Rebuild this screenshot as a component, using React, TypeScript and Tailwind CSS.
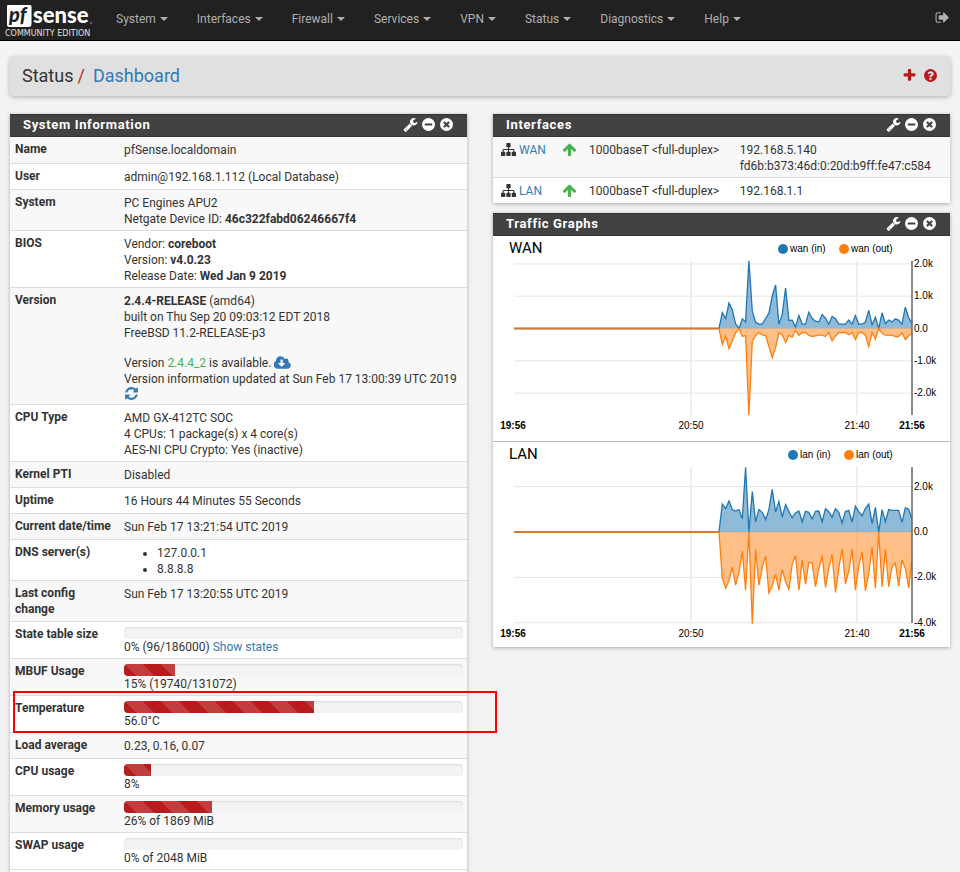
import type { ReactNode } from "react";

const circle =
  "q0 209-103 385.500t-279.500 279.500-385.500 103-385.500-103-279.500-279.500-103-385.500 103-385.500 279.500-279.500 385.500-103 385.500 103 279.500 279.500 103 385.500z";

const icons = {
  signOut:
    "M704 1440q0 4 1 20t.5 26.500-3 23.500-10 19.500-20.500 6.500h-320q-119 0-203.500-84.500t-84.500-203.500v-704q0-119 84.500-203.500t203.500-84.500h320q13 0 22.500 9.500t9.500 22.500q0 4 1 20t.5 26.500-3 23.500-10 19.500-20.500 6.500h-320q-66 0-113 47t-47 113v704q0 66 47 113t113 47h312l11.500 1 11.500 3 8 5.500 7 9 2 13.500zm928-544q0 26-19 45l-544 544q-19 19-45 19t-45-19-19-45v-288h-448q-26 0-45-19t-19-45v-384q0-26 19-45t45-19h448v-288q0-26 19-45t45-19 45 19l544 544q19 19 19 45z",
  plus: "M1600 736v192q0 40-28 68t-68 28h-416v416q0 40-28 68t-68 28h-192q-40 0-68-28t-28-68v-416h-416q-40 0-68-28t-28-68v-192q0-40 28-68t68-28h416v-416q0-40 28-68t68-28h192q40 0 68 28t28 68v416h416q40 0 68 28t28 68z",
  question:
    "M1024 1376v-192q0-14-9-23t-23-9h-192q-14 0-23 9t-9 23v192q0 14 9 23t23 9h192q14 0 23-9t9-23zm256-672q0-88-55.500-163t-138.500-116-170-41q-243 0-371 213-15 24 8 42l132 100q7 6 19 6 16 0 25-12 53-68 86-92 34-24 86-24 48 0 85.500 26t37.500 59q0 38-20 61t-68 45q-63 28-115.500 86.500t-52.500 125.500v36q0 14 9 23t23 9h192q14 0 23-9t9-23q0-19 21.500-49.500t54.500-49.500q32-18 49-28.500t46-35 44.500-48 28-60.500 12.500-81zm384 192" +
    circle,
  minus:
    "M1344 960v-128q0-26-19-45t-45-19h-768q-26 0-45 19t-19 45v128q0 26 19 45t45 19h768q26 0 45-19t19-45zm320-64" +
    circle,
  close:
    "M1277 1122q0-26-19-45l-181-181 181-181q19-19 19-45 0-27-19-46l-90-90q-19-19-46-19-26 0-45 19l-181 181-181-181q-19-19-45-19-27 0-46 19l-90 90q-19 19-19 46 0 26 19 45l181 181-181 181q-19 19-19 45 0 27 19 46l90 90q19 19 46 19 26 0 45-19l181-181 181 181q19 19 45 19 27 0 46-19l90-90q19-19 19-46zm387-226" +
    circle,
  wrench:
    "M448 1472q0-26-19-45t-45-19-45 19-19 45 19 45 45 19 45-19 19-45zm644-420l-682 682q-37 37-90 37-52 0-91-37l-106-108q-38-36-38-90 0-53 38-91l681-681q39 98 114.500 173.500t173.500 114.500zm634-435q0 39-23 106-47 134-164.500 217.500t-258.500 83.500q-185 0-316.500-131.500t-131.500-316.500 131.500-316.500 316.500-131.500q58 0 121.500 16.500t107.500 46.500q16 11 16 28t-16 28l-293 169v224l193 107q5-3 79-48.500t135.500-81 70.500-35.500q15 0 23.500 10t8.500 25z",
  sitemap:
    "M1792 1248v320q0 40-28 68t-68 28h-320q-40 0-68-28t-28-68v-320q0-40 28-68t68-28h96v-192h-512v192h96q40 0 68 28t28 68v320q0 40-28 68t-68 28h-320q-40 0-68-28t-28-68v-320q0-40 28-68t68-28h96v-192h-512v192h96q40 0 68 28t28 68v320q0 40-28 68t-68 28h-320q-40 0-68-28t-28-68v-320q0-40 28-68t68-28h96v-192q0-52 38-90t90-38h512v-192h-96q-40 0-68-28t-28-68v-320q0-40 28-68t68-28h320q40 0 68 28t28 68v320q0 40-28 68t-68 28h-96v192h512q52 0 90 38t38 90v192h96q40 0 68 28t28 68z",
  arrowUp:
    "M1675 971q0 51-37 90l-75 75q-38 38-91 38-54 0-90-38l-294-293v704q0 52-37.500 84.500t-90.500 32.500h-128q-53 0-90.500-32.500t-37.500-84.500v-704l-294 293q-36 38-90 38t-90-38l-75-75q-38-38-38-90 0-53 38-91l651-651q35-37 90-37 54 0 91 37l651 651q37 39 37 91z",
  cloud:
    "M1216 928q0-14-9-23t-23-9h-224v-352q0-13-9.500-22.500t-22.500-9.500h-192q-13 0-22.500 9.500t-9.500 22.500v352h-224q-13 0-22.500 9.500t-9.500 22.500q0 14 9 23l352 352q9 9 23 9t23-9l351-351q10-12 10-24zm640 224q0 159-112.500 271.500t-271.500 112.500h-1088q-185 0-316.500-131.500t-131.500-316.500q0-130 70-240t188-165q-2-30-2-43 0-212 150-362t362-150q156 0 285.500 87t188.500 231q71-62 166-62 106 0 181 75t75 181q0 76-41 138 130 31 213.500 135.500t83.500 238.500z",
  refresh:
    "M1639 1056q0 5-1 7-64 268-268 434.500t-478 166.500q-146 0-282.500-55t-243.500-157l-129 129q-19 19-45 19t-45-19-19-45v-448q0-26 19-45t45-19h448q26 0 45 19t19 45-19 45l-137 137q71 66 161 102t187 36q134 0 250-65t186-179q11-17 53-117 8-23 30-23h192q13 0 22.500 9.500t9.500 22.500zm25-800v448q0 26-19 45t-45 19h-448q-26 0-45-19t-19-45 19-45l138-138q-148-137-349-137-134 0-250 65t-186 179q-11 17-53 117-8 23-30 23h-199q-13 0-22.500-9.500t-9.500-22.500v-7q65-268 270-434.500t480-166.500q146 0 284 55.500t245 156.500l130-129q19-19 45-19t45 19 19 45z",
};

function Icon({ name, className = "size-[15px]" }: { name: keyof typeof icons; className?: string }) {
  return (
    <svg
      viewBox={name === "cloud" ? "0 0 1856 1792" : "0 0 1792 1792"}
      className={`inline-block shrink-0 fill-current ${className}`}
      aria-hidden="true"
    >
      <path d={icons[name]} />
    </svg>
  );
}

function Logo() {
  return (
    <svg
      viewBox="0 0 90 36"
      className="h-[36px] w-[90px] overflow-visible"
      role="img"
      aria-label="pfSense Community Edition"
    >
      <path d="M3 3h22q1.500 0 1.500 1.500V22q0 3-3 3H3.500Q2 24.500 2 23V4q0-1 1-1z" fill="#fff" />
      <text x="4" y="20" fontFamily="Lato, sans-serif" fontWeight="900" fontStyle="italic" fontSize="20" fill="#212121">
        pf
      </text>
      <text x="28" y="21" fontFamily="Lato, sans-serif" fontWeight="900" fontSize="22" fill="#fff">
        sense
      </text>
      <circle cx="86" cy="21" r="0.800" fill="#aaa" />
      <text x="0" y="34" fontFamily="DejaVu Sans, sans-serif" fontSize="8" fill="#e0e0e0">
        COMMUNITY EDITION
      </text>
    </svg>
  );
}

const menu = ["System", "Interfaces", "Firewall", "Services", "VPN", "Status", "Diagnostics", "Help"];

function Navbar() {
  return (
    <nav className="flex h-[41px] items-start border-b border-black bg-[#212121] pr-[10px] pl-[5px] text-[12px] leading-4 text-[#b0b0b0]">
      <a href="#" className="mt-0.5 mr-[21px]">
        <Logo />
      </a>
      <ul className="mt-[11px] flex flex-1 gap-[29px]">
        {menu.map((item) => (
          <li key={item}>
            <button type="button" className="flex items-center gap-1">
              {item}
              <span className="border-x-4 border-t-4 border-x-transparent border-t-current" />
            </button>
          </li>
        ))}
      </ul>
      <button type="button" aria-label="Logout" className="mt-[10px] flex">
        <Icon name="signOut" />
      </button>
    </nav>
  );
}

function Panel({ title, children }: { title: string; children: ReactNode }) {
  return (
    <section className="bg-white shadow-[0_1px_4px_rgba(0,0,0,0.3)]">
      <header className="flex h-[23px] items-center justify-between border-y border-y-[#333] bg-[#424242] pr-[13px] pb-0.5 pl-[13px] text-white">
        <h2 className="text-[13px] leading-4 font-bold tracking-wider">{title}</h2>
        <div className="flex gap-[3px]">
          <button type="button" aria-label="Settings" className="flex">
            <Icon name="wrench" />
          </button>
          <button type="button" aria-label="Minimize" className="flex">
            <Icon name="minus" />
          </button>
          <button type="button" aria-label="Close" className="flex">
            <Icon name="close" />
          </button>
        </div>
      </header>
      {children}
    </section>
  );
}

function Row({ label, marked, children }: { label: string; marked?: boolean; children: ReactNode }) {
  return (
    <tr className="relative h-[26px] border-b border-[#ddd] align-top odd:bg-[#f8f8f8]">
      <th scope="row" className="w-[114px] pt-1 pr-[10px] pb-px pl-[5px] text-left font-bold">
        {label}
        {marked && <span className="absolute -top-1 -right-[30px] -bottom-0.5 left-[3px] border-2 border-[#ff0000]" />}
      </th>
      <td className="pt-[5px] pr-1 pb-[3px]">{children}</td>
    </tr>
  );
}

function Meter({ label, percent, children }: { label: string; percent: number; children: ReactNode }) {
  return (
    <>
      <div
        role="progressbar"
        aria-label={label}
        aria-valuenow={percent}
        className="h-3 overflow-hidden rounded-sm bg-[#f3f3f3] shadow-[inset_0_1px_2px_rgba(0,0,0,0.1)]"
      >
        <div
          className="h-full bg-[#b71c1c] bg-[linear-gradient(45deg,rgba(255,255,255,.15)_25%,transparent_25%,transparent_50%,rgba(255,255,255,.15)_50%,rgba(255,255,255,.15)_75%,transparent_75%)] bg-[length:36px_36px]"
          style={{ width: `${percent}%` }}
        />
      </div>
      {children}
    </>
  );
}

function SystemInformation() {
  return (
    <Panel title="System Information">
      <table className="mb-1 w-full">
        <tbody>
          <Row label="Name">pfSense.localdomain</Row>
          <Row label="User">admin@192.168.1.112 (Local Database)</Row>
          <Row label="System">
            PC Engines APU2
            <br />
            Netgate Device ID: <b>46c322fabd06246667f4</b>
          </Row>
          <Row label="BIOS">
            Vendor: <b>coreboot</b>
            <br />
            Version: <b>v4.0.23</b>
            <br />
            Release Date: <b>Wed Jan 9 2019</b>
          </Row>
          <Row label="Version">
            <p>
              <b>2.4.4-RELEASE</b> (amd64)
              <br />
              built on Thu Sep 20 09:03:12 EDT 2018
              <br />
              FreeBSD 11.2-RELEASE-p3
            </p>
            <p className="mt-[14px]">
              Version <span className="text-[#4caf50]">2.4.4_2</span> is available.{" "}
              <a href="#" aria-label="Update" className="inline-flex h-3 items-center align-top text-[#337ab7]">
                <Icon name="cloud" className="mt-1 h-4 w-[17px]" />
              </a>
              <br />
              Version information updated at Sun Feb 17 13:00:39 UTC 2019
            </p>
            <button type="button" aria-label="Refresh" className="flex h-[14px] items-center text-[#337ab7]">
              <Icon name="refresh" />
            </button>
          </Row>
          <Row label="CPU Type">
            AMD GX-412TC SOC
            <br />
            4 CPUs: 1 package(s) x 4 core(s)
            <br />
            AES-NI CPU Crypto: Yes (inactive)
          </Row>
          <Row label="Kernel PTI">Disabled</Row>
          <Row label="Uptime">16 Hours 44 Minutes 55 Seconds</Row>
          <Row label="Current date/time">Sun Feb 17 13:21:54 UTC 2019</Row>
          <Row label="DNS server(s)">
            <ul className="list-disc pl-[33px]">
              <li>127.0.0.1</li>
              <li>8.8.8.8</li>
            </ul>
          </Row>
          <Row label="Last config change">
            <p className="pb-4">Sun Feb 17 13:20:55 UTC 2019</p>
          </Row>
          <Row label="State table size">
            <Meter label="State table size" percent={0}>
              0% (96/186000){" "}
              <a href="#" className="text-[#337ab7]">
                Show states
              </a>
            </Meter>
          </Row>
          <Row label="MBUF Usage">
            <Meter label="MBUF Usage" percent={15}>
              15% (19740/131072)
            </Meter>
          </Row>
          <Row label="Temperature" marked>
            <Meter label="Temperature" percent={56}>
              56.0°C
            </Meter>
          </Row>
          <Row label="Load average">0.23, 0.16, 0.07</Row>
          <Row label="CPU usage">
            <Meter label="CPU usage" percent={8}>
              8%
            </Meter>
          </Row>
          <Row label="Memory usage">
            <Meter label="Memory usage" percent={26}>
              26% of 1869 MiB
            </Meter>
          </Row>
          <Row label="SWAP usage">
            <Meter label="SWAP usage" percent={0}>
              0% of 2048 MiB
            </Meter>
          </Row>
        </tbody>
      </table>
    </Panel>
  );
}

const interfaces = [
  { name: "WAN", addresses: ["192.168.5.140", "fd6b:b373:46d:0:20d:b9ff:fe47:c584"] },
  { name: "LAN", addresses: ["192.168.1.1"] },
];

function Interfaces() {
  return (
    <Panel title="Interfaces">
      <table className="w-full table-fixed">
        <colgroup>
          <col className="w-[15%]" />
          <col className="w-[6%]" />
          <col className="w-[33%]" />
          <col />
        </colgroup>
        <tbody>
          {interfaces.map(({ name, addresses }) => (
            <tr key={name} className="border-b border-[#ddd] align-top last:border-transparent odd:bg-[#f8f8f8]">
              <td className="pt-[5px] pb-[3px] pl-2">
                <span className="flex gap-[3px]">
                  <Icon name="sitemap" />
                  <a href="#" className="text-[#337ab7]">
                    {name}
                  </a>
                </span>
              </td>
              <td className="pt-1 text-[#4caf50]">
                <Icon name="arrowUp" className="block size-[15px]" />
              </td>
              <td className="pt-[5px] whitespace-nowrap">1000baseT &lt;full-duplex&gt;</td>
              <td className="pt-[5px] pb-[3px]">
                {addresses.map((address) => (
                  <div key={address}>{address}</div>
                ))}
              </td>
            </tr>
          ))}
        </tbody>
      </table>
    </Panel>
  );
}

const wanIn = [
  0, 495, 310, 785, 575, 145, 0, 300, 205, 2095, 535, 195, 135, 135, 310, 475, 1000, 1350, 135, 420, 1250, 250, 260, 50,
  400, 135, 135, 505, 310, 225, 205, 430, 320, 135, 370, 300, 135, 135, 135, 260, 135, 400, 135, 135, 195, 565, 115, 350,
  0, 485, 145, 260, 205, 300, 250, 135, 660, 330, 165,
];
const wanOut = [
  0, 495, 227, 630, 390, 134, 0, 247, 216, 2680, 390, 216, 134, 196, 216, 557, 897, 588, 124, 196, 433, 206, 268, 62,
  206, 124, 124, 206, 247, 227, 206, 206, 247, 124, 381, 237, 124, 124, 124, 196, 124, 340, 124, 124, 206, 557, 124, 330,
  0, 144, 206, 206, 206, 247, 247, 134, 340, 227, 155,
];
const lanIn = [
  0, 1235, 1030, 1370, 985, 925, 985, 575, 2850, 0, 1780, 440, 985, 870, 545, 985, 1880, 880, 1340, 660, 1205, 900, 630,
  840, 925, 455, 910, 870, 575, 910, 925, 455, 1030, 900, 650, 1030, 870, 400, 900, 955, 440, 1130, 900, 705, 1045, 1235,
  370, 1090, 0, 985, 455, 985, 955, 955, 955, 425, 1060, 1000, 545,
];
const lanOut = [
  0, 2045, 2485, 2130, 1545, 2340, 1780, 840, 2560, 0, 4045, 765, 2340, 1545, 1060, 2690, 2370, 1870, 2560, 1645, 2190,
  2530, 1410, 1045, 2560, 1235, 2295, 1340, 1370, 2410, 1630, 1045, 2440, 1575, 985, 2660, 1600, 750, 2280, 1720, 750,
  2560, 1485, 870, 2590, 1825, 660, 2485, 0, 2410, 765, 2410, 1545, 1380, 2370, 1220, 1600, 2470, 1160,
];

type ChartProps = {
  name: string;
  incoming: number[];
  outgoing: number[];
  ticks: number[];
  zero: number;
  perK: number;
  bottom: number;
  legend: [number, number];
};

function TrafficChart({ name, incoming, outgoing, ticks, zero, perK, bottom, legend }: ChartProps) {
  const left = 21;
  const start = 226;
  const right = 419;
  const line = (data: number[], sign: number) =>
    data
      .map((v, i) => {
        const x = start + (i * (right - start)) / (data.length - 1);
        return `${x.toFixed(1)},${(zero - (sign * v * perK) / 1000).toFixed(1)}`;
      })
      .join(" ");
  const series = [
    { points: line(incoming, 1), color: "#1f77b4" },
    { points: line(outgoing, -1), color: "#ff7f0e" },
  ];

  return (
    <svg
      viewBox="0 0 457 205"
      className="block w-full"
      fontFamily="Liberation Sans, Arial, sans-serif"
      fontSize="10"
      role="img"
    >
      <text x="16" y="17" fontFamily="Roboto, sans-serif" fontSize="15">
        {name.toUpperCase()}
      </text>
      <circle cx={legend[0]} cy="13" r="5" fill="#1f77b4" />
      <text x={legend[0] + 7} y="16">
        {name} (in)
      </text>
      <circle cx={legend[1]} cy="13" r="5" fill="#ff7f0e" />
      <text x={legend[1] + 7} y="16">
        {name} (out)
      </text>
      {ticks.map((t) => (
        <g key={t}>
          <path d={`M${left} ${zero - t * perK}H${right}`} stroke="#e5e5e5" />
          <text x="421" y={zero - t * perK + 3}>
            {t === 0 ? "0.0" : `${t.toFixed(1)}k`}
          </text>
        </g>
      ))}
      <path d={`M198 25V${bottom}M364 25V${bottom}`} stroke="#eee" strokeWidth="2" />
      {series.map(({ points, color }) => (
        <g key={color}>
          <polygon points={points + ` ${right},${zero} ${start},${zero}`} fill={color} fillOpacity="0.5" />
          <polyline points={`${left},${zero} ${points}`} fill="none" stroke={color} strokeWidth="1.300" />
        </g>
      ))}
      <path d={`M${left} ${zero}H${start}`} stroke="#d27a2c" strokeWidth="1.500" />
      <path d={`M419 25V${bottom}`} stroke="#666" strokeWidth="1.500" />
      <g textAnchor="middle">
        <text x="20" y={bottom + 14} fontWeight="bold">
          19:56
        </text>
        <text x="198" y={bottom + 14}>
          20:50
        </text>
        <text x="364" y={bottom + 14}>
          21:40
        </text>
        <text x={right} y={bottom + 14} fontWeight="bold">
          21:56
        </text>
      </g>
    </svg>
  );
}

function TrafficGraphs() {
  return (
    <Panel title="Traffic Graphs">
      <div className="border-b border-[#bbb]">
        <TrafficChart
          name="wan"
          incoming={wanIn}
          outgoing={wanOut}
          ticks={[2, 1, 0, -1, -2]}
          zero={92.5}
          perK={32.3}
          bottom={179}
          legend={[290, 351]}
        />
      </div>
      <TrafficChart
        name="lan"
        incoming={lanIn}
        outgoing={lanOut}
        ticks={[2, 0, -2, -4]}
        zero={90}
        perK={22.7}
        bottom={181}
        legend={[300, 356]}
      />
    </Panel>
  );
}

export default function App() {
  return (
    <div className="min-h-screen bg-[#f3f3f3] font-[Roboto,sans-serif] text-[12px] leading-4 text-[#333]">
      <Navbar />
      <main className="px-[10px] pt-4">
        <header className="mb-[18px] flex h-[39px] items-center justify-between rounded-sm bg-[#e0e0e0] px-3 pb-0.5 shadow-[0_1px_5px_rgba(0,0,0,0.3)]">
          <h1 className="flex text-[18px] leading-6">
            Status <span className="mr-2 ml-1 text-[#c62828]">/</span>
            <a href="#" className="text-[#337ab7]">
              Dashboard
            </a>
          </h1>
          <div className="flex gap-[6px] text-[#b71c1c]">
            <button type="button" aria-label="Add widget" className="flex">
              <Icon name="plus" />
            </button>
            <a href="#" aria-label="Help" className="flex">
              <Icon name="question" />
            </a>
          </div>
        </header>
        <div className="grid grid-cols-2 items-start gap-[26px]">
          <SystemInformation />
          <div className="grid gap-[10px]">
            <Interfaces />
            <TrafficGraphs />
          </div>
        </div>
      </main>
    </div>
  );
}
